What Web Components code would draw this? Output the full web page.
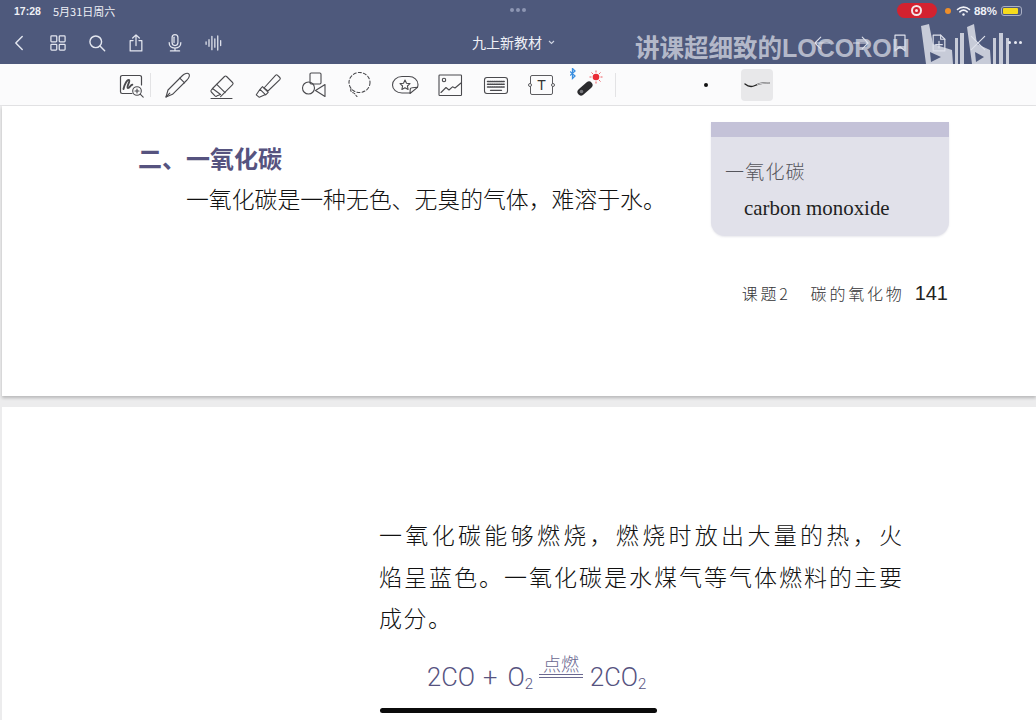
<!DOCTYPE html>
<html lang="zh">
<head>
<meta charset="utf-8">
<title>九上新教材</title>
<style>
    html, body { margin: 0; padding: 0; background: #f3f3f4; }
    body { font-family: "Noto Sans CJK SC", "Liberation Sans", sans-serif; }
</style>
</head>
<body>
<note-app>
    <status-bar slot="chrome"></status-bar>
    <nav-bar slot="chrome" title="九上新教材"></nav-bar>
    <tool-bar slot="tools"></tool-bar>

    <doc-page slot="pages" first>
        <div slot="main">
            <book-heading>二、一氧化碳</book-heading>
            <book-line>一氧化碳是一种无色、无臭的气体&#xFF0C;难溶于水。</book-line>
        </div>
        <side-note slot="side" cn="一氧化碳" en="carbon monoxide"></side-note>
        <page-foot slot="foot" lesson="课题2" topic="碳的氧化物" num="141"></page-foot>
    </doc-page>

    <doc-page slot="pages">
        <book-para slot="body">
            <span>一氧化碳能够燃烧&#xFF0C;燃烧时放出大量的热&#xFF0C;火</span>
            <span>焰呈蓝色。一氧化碳是水煤气等气体燃料的主要</span>
            <span class="last">成分。</span>
        </book-para>
        <chem-equation slot="body"></chem-equation>
    </doc-page>
</note-app>

<script>
// all the line art, keyed by name. stroke icons use currentColor
const ICONS = {
    back: '<path d="M15.5 5 8.5 12l7 7" />',
    grid: '<rect x="3.5" y="3.5" width="7" height="7" rx="1"/><rect x="13.5" y="3.5" width="7" height="7" rx="1"/><rect x="3.5" y="13.5" width="7" height="7" rx="1"/><rect x="13.5" y="13.5" width="7" height="7" rx="1"/>',
    search: '<circle cx="10.5" cy="10.5" r="7"/><path d="m15.6 15.6 5.6 5.6"/>',
    share: '<path d="M12 15V2.5M8 6l4-3.8L16 6"/><path d="M8.5 9H5v12.5h14V9h-3.5"/>',
    mic: '<rect x="8.5" y="2" width="7" height="13" rx="3.5"/><path d="M5 11.5c0 4.2 3 6.6 7 6.6s7-2.4 7-6.6M12 18.2v3M6.5 21.5h11"/><path d="M10.8 5v6.5" />',
    wave: '<path d="M2.5 10.5v3M6 8v8M9.5 4v16M13 7v10M16.5 3.5v17M20 9v6"/>',
    left: '<path d="M21 12H4M10.5 5 3.5 12l7 7"/>',
    right: '<path d="M3 12h17M13.5 5l7 7-7 7"/>',
    bookmark: '<path d="M6 2.5h12v19l-6-5-6 5z"/>',
    addpage: '<path d="M5 2.5h9l5 5v14H5z"/><path d="M14 2.5v5h5M12 10v8M8 14h8"/>',
    close: '<path d="m4 4 16 16M20 4 4 20"/>',
    zoomink: '<path d="M15 22.5H5.2a1.7 1.7 0 0 1-1.7-1.7V6.2a1.7 1.7 0 0 1 1.7-1.7h17.6a1.7 1.7 0 0 1 1.7 1.7V14" stroke-width="1.2"/><path d="M6.5 18c1-5 4-10 5.6-9 1.5 1-3 7-1.3 8 1.5.8 3-3.5 4.5-3.2" stroke-width="1.9"/><circle cx="20" cy="20" r="4.3" stroke-width="1.1"/><path d="m23.2 23.2 3 3M18 20h4M20 18v4" stroke-width="1.1"/>',
    pen: '<path d="M3 26 5 19 19.5 4.5C21.5 2.5 24.5 1.6 25.8 2.8 27 4 25.7 7 24 9L9.5 23.3z"/><path d="M16.8 7.2 21.6 11.8M3 26l3.8-3.8"/>',
    eraser: '<path d="m4.5 17.5 12-12a1.5 1.5 0 0 1 2.1 0l6 6a1.5 1.5 0 0 1 0 2.1l-12 12"/><path d="M4.5 17.5 3.3 19a1.5 1.5 0 0 0 0 2l3.7 3.8a1.5 1.5 0 0 0 2.1 0l3.5-1.3zM8.7 13.3l8.4 8.4M3 27.5h21"/>',
    marker: '<path d="M10 17 21.5 4.3a1.5 1.5 0 0 1 2.1 0l2.2 2.2a1.5 1.5 0 0 1 0 2.1L14 20z"/><path d="m8.5 15.7 5.7 5.6-2.5 2.5-5.7-5.5zM6 18.3l-3.7 5.5 3 2.5 6.2-2.8"/>',
    shapes: '<rect x="10" y="2" width="11" height="11" rx="1.2"/><circle cx="8.5" cy="17" r="6"/><path d="M25 13.5v12l-9.5-6z"/>',
    lasso: '<ellipse cx="14.5" cy="11.5" rx="10.5" ry="10" stroke-dasharray="3 2.2"/><path d="M6 18c-1.5 2.5 2 3.5 3.5 4.5.8.6 1.2 1.8 2.5 3" stroke-dasharray="2.5 2"/>',
    sticker: '<path d="M19 22H11C5.5 22 1.5 18.5 1.5 14S5.5 5.5 11 5.5h7c5 0 9 3.5 9 8 0 1-.2 2-.6 3"/><path d="m19 22.5.2-3.8a2 2 0 0 1 2-2l5.3-.4z" /><path d="m14 9 1.5 3.2 3.5.4-2.6 2.4.7 3.4-3.1-1.7-3.1 1.7.7-3.4L9 12.6l3.5-.4z"/>',
    picture: '<rect x="3" y="4" width="22.5" height="20.5" rx=".8"/><circle cx="8" cy="9" r="1.7"/><path d="m5 21.5 5-5 3 2.5 3.5-3.2 2.5 1.2L25 12"/>',
    keyboard: '<rect x="2.5" y="6.5" width="23" height="16" rx="2.5"/><path d="M5.5 10.5h17M5.5 13.3h17M5.5 16h17" stroke-dasharray="1.3 .9" stroke-width="1.5"/><path d="M8.5 19.3h11" stroke-width="1.3"/>'
};

class XIcon extends HTMLElement {
    constructor() {
        super();
        const size = this.getAttribute('size') || 24;
        const vb = this.getAttribute('box') || 24;
        const sw = this.getAttribute('sw') || 1.6;
        this.attachShadow({mode: 'open'}).innerHTML = `
        <style>
            :host{ display:block; width:${size}px; height:${size}px; }
            svg{ display:block; width:100%; height:100%; fill:none; stroke:currentColor;
                stroke-width:${sw}; stroke-linecap:round; stroke-linejoin:round; overflow:visible; }
        </style>
        <svg viewBox="0 0 ${vb} ${vb}">${ICONS[this.getAttribute('name')] || ''}</svg>`;
    }
}
customElements.define('x-icon', XIcon);

customElements.define('note-app', class extends HTMLElement {
    constructor() {
        super();
        this.attachShadow({mode: 'open'}).innerHTML = `
        <style>
            :host{ display:flex; flex-direction:column; position:relative; width:1036px; height:720px; overflow:hidden; background:#f3f3f4; }
            .chrome{ background:#4e597c; height:64px; flex:none; position:relative; overflow:hidden; }
            .tools{ flex:none; }
            .pages{ flex:1; min-height:0; padding-left:2px; background:#ececed; }
            .home{ position:absolute; left:380px; top:708px; width:277px; height:5px; border-radius:3px; background:#0b0b0b; }
        </style>
        <div class="chrome"><slot name="chrome"></slot></div>
        <div class="tools"><slot name="tools"></slot></div>
        <div class="pages"><slot name="pages"></slot></div>
        <div class="home"></div>`;
    }
});

customElements.define('status-bar', class extends HTMLElement {
    constructor() {
        super();
        this.attachShadow({mode: 'open'}).innerHTML = `
        <style>
            :host{ display:flex; align-items:center; height:21px; padding:0 14px; color:#eef0f6; font-size:11px; position:relative; }
            .time{ font-family:"Liberation Sans",sans-serif; font-weight:700; font-size:10.5px; width:39px; }
            .dots{ position:absolute; left:510px; top:8px; display:flex; gap:2px; }
            .dots i{ width:4px; height:4px; border-radius:50%; background:#8d96b3; }
            .right{ margin-left:auto; display:flex; align-items:center; }
            .rec{ width:40px; height:15px; border-radius:8px; background:#d3222f; display:flex; align-items:center; justify-content:center; margin-right:8px; }
            .rec b{ width:11px; height:11px; border-radius:50%; box-sizing:border-box; border:2px solid #f6e7e8; display:flex; align-items:center; justify-content:center; }
            .rec b::after{ content:""; width:3px; height:3px; border-radius:50%; background:#f6e7e8; }
            .orange{ width:6px; height:6px; border-radius:50%; background:#ee8f2a; margin-right:5px; }
            .wifi{ width:15px; height:12px; display:block; margin-right:3px; }
            .pct{ font-family:"Liberation Sans",sans-serif; font-weight:700; font-size:11.5px; margin-right:4px; }
            .bat{ width:21px; height:10px; border:1px solid #aab0c4; border-radius:3px; padding:1px; box-sizing:border-box; }
            .bat i{ display:block; height:100%; width:88%; background:#f7dc1c; border-radius:1px; }
        </style>
        <span class="time">17:28</span><span>5月31日周六</span>
        <div class="dots"><i></i><i></i><i></i></div>
        <div class="right">
            <div class="rec"><b></b></div>
            <div class="orange"></div>
            <svg class="wifi" viewBox="0 0 15 12" fill="none" stroke="#f2f3f8" stroke-width="1.6" stroke-linecap="round"><path d="M1.5 4.5c3.5-3.2 8.5-3.2 12 0M3.8 6.8c2.2-2 5.2-2 7.4 0"/><circle cx="7.5" cy="9.5" r="1.2" fill="#f2f3f8" stroke="none"/></svg>
            <span class="pct">88%</span>
            <div class="bat"><i></i></div>
        </div>`;
    }
});

customElements.define('nav-bar', class extends HTMLElement {
    constructor() {
        super();
        this.attachShadow({mode: 'open'}).innerHTML = `
        <style>
            :host{ display:flex; align-items:center; height:43px; color:#e3e6ef; position:relative; padding-left:8px; box-sizing:border-box; }
            .left{ display:flex; align-items:center; gap:19px; }
            .left x-icon:first-child{ margin-right:-1px; }
            .title{ position:absolute; left:472px; top:11px; font-size:14px; line-height:20px; color:#eef0f6; display:flex; align-items:center; gap:6px; white-space:nowrap; }
            .title svg{ width:7px; height:5px; }
            .right{ margin-left:auto; display:flex; align-items:center; gap:19px; margin-right:14px; color:#dfe2ec; position:relative; z-index:1; }
            .more{ display:flex; gap:2.5px; margin-left:1px; }
            .more i{ width:3px; height:3px; border-radius:50%; background:#e8eaf2; }
            .mark{ position:absolute; left:635px; top:10px; font-size:24.5px; line-height:32px; font-weight:700; color:rgba(233,235,242,.68); white-space:nowrap; }
            .mark span{ font-family:"Liberation Sans",sans-serif; font-size:25px; }
            .logo{ position:absolute; left:918px; top:3px; width:98px; height:40px; opacity:.78; }
        </style>
        <div class="left">
            <x-icon name="back" size="22"></x-icon>
            <x-icon name="grid" size="20" sw="1.5"></x-icon>
            <x-icon name="search" size="20" sw="1.7"></x-icon>
            <x-icon name="share" size="20" sw="1.5"></x-icon>
            <x-icon name="mic" size="20" sw="1.5"></x-icon>
            <x-icon name="wave" size="20" sw="1.5"></x-icon>
        </div>
        <div class="title">${this.getAttribute('title')}<svg viewBox="0 0 7 5" fill="none" stroke="#cfd4e2" stroke-width="1.1"><path d="m1 1 2.5 2.5L6 1"/></svg></div>
        <div class="mark">讲课超细致的<span>LOCOROH</span></div>
        <svg class="logo" viewBox="0 0 98 40" fill="#e9ebf2">
            <path d="M3 2 11 0 15 20 34 26 35 40H8z"/>
            <path d="m12 28 11 5-10 5z" fill="#4e597c"/>
            <path d="M37 14h3v26h-3zM42 9h4v31h-4z"/>
            <path d="M49 3 56 0 59 20 72 26 73 40H54z"/>
            <path d="m57 28 9 5-8 5z" fill="#4e597c"/>
            <path d="M75 14h3v26h-3zM81 9h4v31h-4zM88 14h3v26h-3z"/>
        </svg>
        <div class="right">
            <x-icon name="left" size="20" sw="1.3"></x-icon>
            <x-icon name="right" size="20" sw="1.3"></x-icon>
            <x-icon name="bookmark" size="20" sw="1.4"></x-icon>
            <x-icon name="addpage" size="20" sw="1.4"></x-icon>
            <x-icon name="close" size="20" sw="1.4"></x-icon>
            <div class="more"><i></i><i></i><i></i></div>
        </div>`;
    }
});

customElements.define('tool-bar', class extends HTMLElement {
    constructor() {
        super();
        const names = ['pen', 'eraser', 'marker', 'shapes', 'lasso', 'sticker', 'picture', 'keyboard'];
        this.attachShadow({mode: 'open'}).innerHTML = `
        <style>
            :host{ display:flex; align-items:center; height:42px; box-sizing:border-box; padding-left:117px; background:#fbfbfc; border-bottom:1px solid #e4e4e6; color:#4a4a4e; }
            .sep{ width:1px; height:24px; background:#e3e3e5; flex:none; }
            .t{ width:45.6px; display:flex; justify-content:center; flex:none; }
            .first{ margin-right:5px; width:28px; }
            .sep + .t{ margin-left:3px; }
            .box{ width:23px; height:20px; border:1.2px solid #5c5c60; border-radius:2px; box-sizing:border-box; display:flex; align-items:center; justify-content:center; position:relative; font:14px/1 "Liberation Sans",sans-serif; color:#333; }
            .box::before,.box::after{ content:""; position:absolute; top:50%; width:4px; height:4px; margin-top:-2px; border-radius:50%; background:#fbfbfc; border:1px solid #5c5c60; box-sizing:border-box; }
            .box::before{ left:-3px; } .box::after{ right:-3px; }
            .laser{ width:34px; height:34px; display:block; }
            .sep.b{ margin-left:5px; }
            .dot{ width:4px; height:4px; border-radius:50%; background:#111; margin-left:88px; flex:none; }
            .brush{ width:32px; height:32px; border-radius:4px; background:#e8e8ea; margin-left:33px; display:flex; align-items:center; justify-content:center; }
            .brush svg{ width:26px; height:10px; }
        </style>
        <div class="t first"><x-icon name="zoomink" size="28" box="28" sw="1.2"></x-icon></div>
        <div class="sep"></div>
        ${names.map(n => `<div class="t"><x-icon name="${n}" size="28" box="28" sw="1.1"></x-icon></div>`).join('')}
        <div class="t"><div class="box">T</div></div>
        <div class="t">
            <svg class="laser" viewBox="0 0 34 34" fill="none">
                <path d="M0 3.5 5 8 2.5 10.5V.5L5 3 0 7.5" stroke="#3b8fe0" stroke-width="1.3"/>
                <path d="M11 24 19 17" stroke="#2b2b2e" stroke-width="7" stroke-linecap="round"/>
                <circle cx="11.5" cy="23.5" r="1.8" fill="#77777c"/>
                <circle cx="26" cy="9" r="3.3" fill="#ea2a35"/>
                <path d="M26 2.5v2M26 13.5v2M19.5 9h2M30.5 9h2M21.5 4.5l1.4 1.4M29.1 12.1l1.4 1.4M30.5 4.5l-1.4 1.4" stroke="#ee5a60" stroke-width="1"/>
            </svg>
        </div>
        <div class="sep b"></div>
        <div class="dot"></div>
        <div class="brush"><svg viewBox="0 0 26 10" fill="none"><path d="M1 4c3 2.5 7 3 10 1.5S18 2.5 25 3" stroke="#222" stroke-width="1.3" stroke-linecap="round"/><path d="M13 4.5c4-1.5 7-1.7 12-1.5" stroke="#c9c9cc" stroke-width="1.3"/></svg></div>`;
    }
});

customElements.define('doc-page', class extends HTMLElement {
    constructor() {
        super();
        this.attachShadow({mode: 'open'}).innerHTML = `
        <style>
            :host{ display:block; background:#fff; }
            :host([first]){ height:290px; margin-bottom:11px; box-shadow:0 2px 3px rgba(0,0,0,.22); }
            :host(:not([first])){ height:313px; padding-top:107px; box-sizing:content-box; }
            .top{ display:flex; justify-content:space-between; padding:16px 87px 0 136px; }
            .foot{ display:block; padding-right:88px; margin-top:44px; }
            .body{ display:block; padding-left:377px; width:523px; }
            :host(:not([first])) .top, :host(:not([first])) .foot{ display:none; }
            :host([first]) .body{ display:none; }
        </style>
        <div class="top"><slot name="main"></slot><slot name="side"></slot></div>
        <div class="foot"><slot name="foot"></slot></div>
        <div class="body"><slot name="body"></slot></div>`;
    }
});

customElements.define('book-heading', class extends HTMLElement {
    constructor() {
        super();
        this.attachShadow({mode: 'open'}).innerHTML = `
        <style>
            :host{ display:block; font-size:24px; line-height:34px; font-weight:700; color:#56537f; margin-top:19px; white-space:nowrap; }
        </style>
        <slot></slot>`;
    }
});

customElements.define('book-line', class extends HTMLElement {
    constructor() {
        super();
        this.attachShadow({mode: 'open'}).innerHTML = `
        <style>
            :host{ display:block; font-size:22.85px; line-height:34px; color:#111; margin:6px 0 0 48px; white-space:nowrap; font-weight:300; }
        </style>
        <slot></slot>`;
    }
});

customElements.define('side-note', class extends HTMLElement {
    constructor() {
        super();
        this.attachShadow({mode: 'open'}).innerHTML = `
        <style>
            :host{ display:block; width:238px; height:114px; box-sizing:border-box; background:#e1e1ea; border-radius:0 0 14px 14px; overflow:hidden; flex:none; box-shadow:0 1px 2px rgba(120,120,150,.18); }
            .band{ height:15px; background:#c4c2d8; }
            .cn{ font-size:19px; line-height:28px; letter-spacing:1.2px; margin:20px 0 0 14px; color:#55555c; font-weight:300; }
            .en{ font-family:"Liberation Serif",serif; font-size:20.9px; line-height:26px; margin:10px 0 0 33px; color:#1f1f22; white-space:nowrap; }
        </style>
        <div class="band"></div>
        <div class="cn">${this.getAttribute('cn')}</div>
        <div class="en">${this.getAttribute('en')}</div>`;
    }
});

customElements.define('page-foot', class extends HTMLElement {
    constructor() {
        super();
        this.attachShadow({mode: 'open'}).innerHTML = `
        <style>
            :host{ display:flex; justify-content:flex-end; align-items:center; height:26px; color:#333336; white-space:nowrap; }
            .txt{ font-size:16px; letter-spacing:2.8px; font-weight:300; }
            .les{ margin-right:20px; }
            .num{ font-family:"Liberation Sans",sans-serif; font-size:20px; margin-left:10px; color:#222; }
        </style>
        <span class="txt les">${this.getAttribute('lesson')}</span>
        <span class="txt">${this.getAttribute('topic')}</span>
        <span class="num">${this.getAttribute('num')}</span>`;
    }
});

customElements.define('book-para', class extends HTMLElement {
    constructor() {
        super();
        this.attachShadow({mode: 'open'}).innerHTML = `
        <style>
            :host{ display:block; font-size:23px; line-height:41.5px; color:#111; font-weight:300; }
            ::slotted(span){ display:block; text-align:justify; text-align-last:justify; white-space:nowrap; }
            ::slotted(span.last){ text-align-last:left; letter-spacing:1.5px; }
        </style>
        <slot></slot>`;
    }
});

customElements.define('chem-equation', class extends HTMLElement {
    constructor() {
        super();
        this.attachShadow({mode: 'open'}).innerHTML = `
        <style>
            :host{ display:flex; align-items:flex-end; height:44px; margin:9px 0 0 48px; color:#56537f; font-family:Roboto,"Liberation Sans",sans-serif; font-weight:300; font-size:25.5px; line-height:30px; white-space:nowrap; }
            sub{ font-size:15px; line-height:0; vertical-align:-3px; }
            .plus{ margin:0 10px 0 8px; }
            .arrow{ display:flex; flex-direction:column; align-items:center; width:44px; margin:5px 7px 0 6px; align-self:flex-start; }
            .arrow span{ font-family:"Noto Sans CJK SC",sans-serif; font-size:18px; line-height:20px; font-weight:300; color:#6a6890; }
            .arrow i{ display:block; width:100%; height:4px; margin-top:1px; border-top:1px solid #6a6890; border-bottom:1px solid #6a6890; box-sizing:border-box; }
        </style>
        <span>2CO</span><span class="plus">+</span><span>O<sub>2</sub></span>
        <div class="arrow"><span>点燃</span><i></i></div>
        <span>2CO<sub>2</sub></span>`;
    }
});
</script>
</body>
</html>
